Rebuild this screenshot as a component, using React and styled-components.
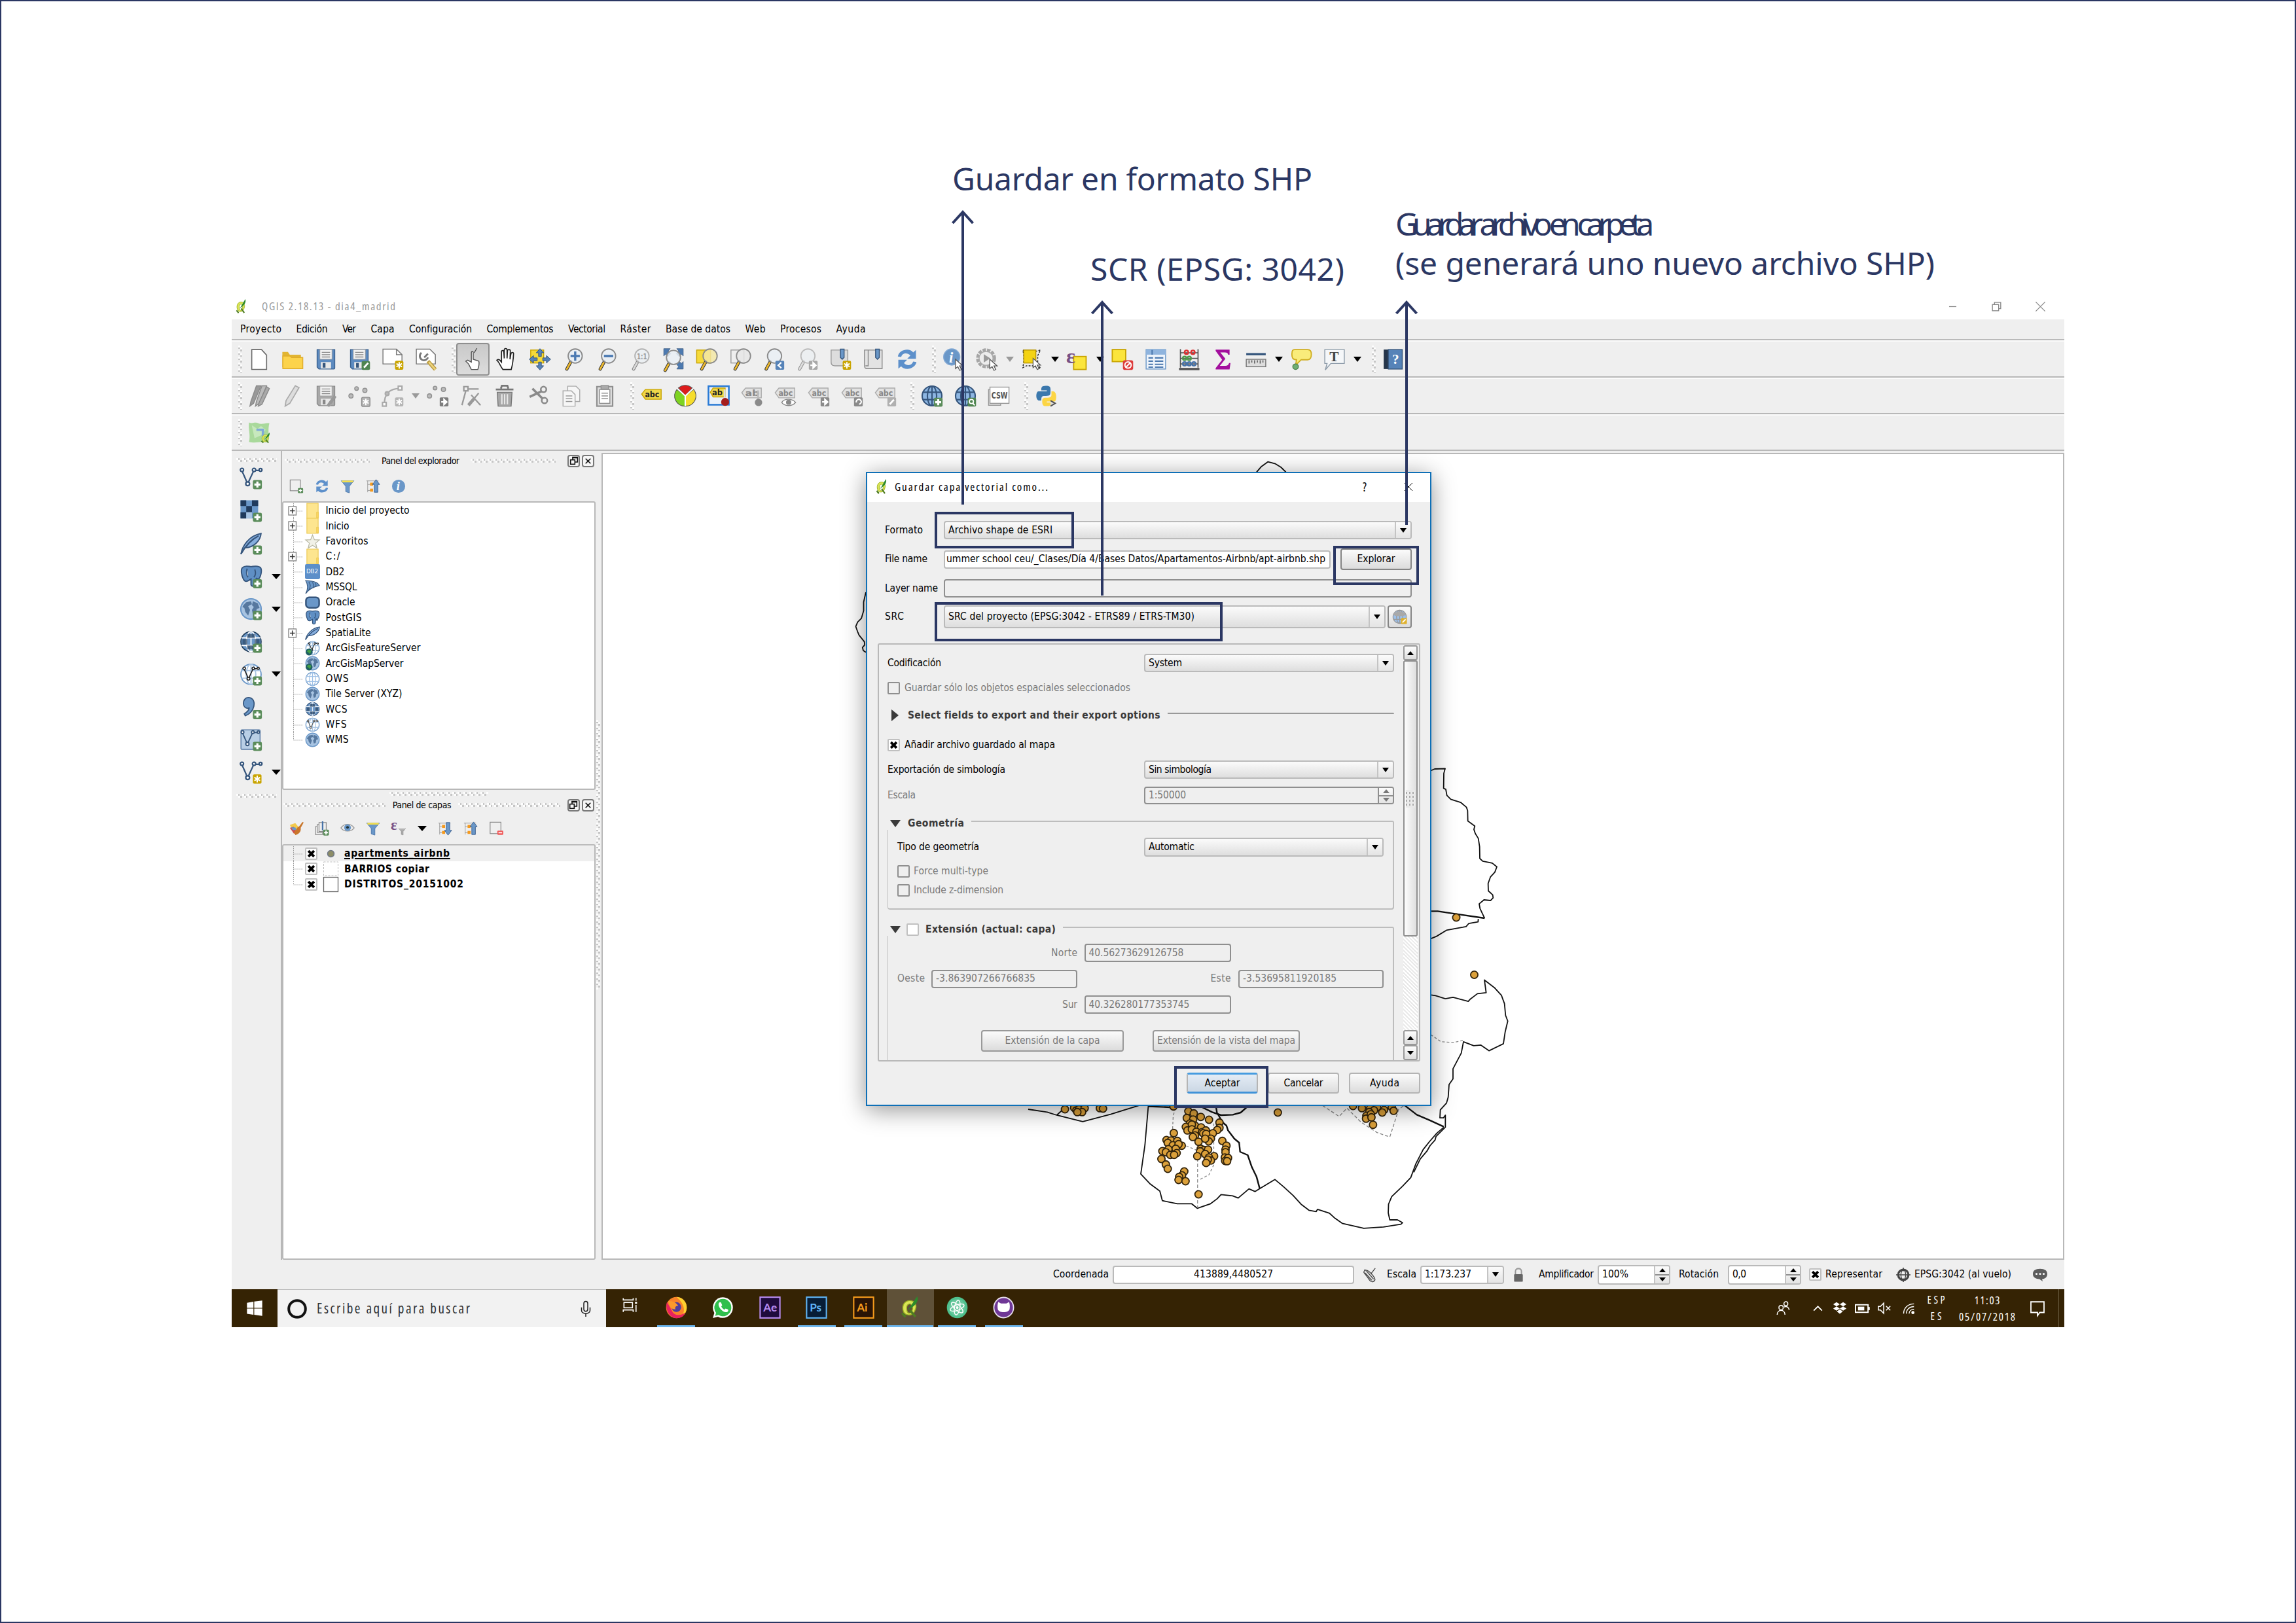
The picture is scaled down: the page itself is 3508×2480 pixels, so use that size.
import React, { useLayoutEffect, useRef, useState } from "react";
import styled, { createGlobalStyle, css } from "styled-components";

const NAVY = "#2b3763";
const UI = `"DejaVu Sans Condensed", "DejaVu Sans", sans-serif`;
const SEGOE = `"Open Sans", "Noto Sans", sans-serif`;

const Global = createGlobalStyle`
  * { box-sizing: border-box; }
  html, body { margin: 0; padding: 0; background: #fff; }
  body { font-family: ${UI}; font-stretch: condensed; font-size: 16px; color: #000; }
`;

/* ---------- text fitted to a measured width ---------- */
const Span = styled.span`
  display: inline-block;
  flex: none;
  white-space: pre;
  line-height: ${(p) => p.$lh || 1.2};
  font-size: ${(p) => p.$s || 15.5}px;
  color: ${(p) => p.$c || "#000"};
  font-weight: ${(p) => (p.$b ? 700 : 400)};
  font-family: ${(p) => p.$f || UI};
  text-decoration: ${(p) => (p.$u ? "underline" : "none")};
  text-decoration-thickness: 2px;
  text-underline-offset: 2px;
`;
function T({ children, w, s, c, b, f, u, lh }) {
  const ref = useRef(null);
  const [ls, setLs] = useState(0);
  useLayoutEffect(() => {
    if (!w) return;
    const nat = ref.current.getBoundingClientRect().width;
    setLs((w - nat) / Math.max(1, children.length - 1));
  }, []);
  return (
    <Span ref={ref} $s={s} $c={c} $b={b} $f={f} $u={u} $lh={lh} style={{ letterSpacing: ls, marginRight: -ls }}>
      {children}
    </Span>
  );
}

/* ---------- icons ---------- */
const BL = "#6a97c8", DB = "#35557c", GR = "#5a8c5a";
const Plus = ({ x = 14, y = 14 }) => (
  <g transform={`translate(${x} ${y})`}>
    <rect width="9.4" height="9.6" rx="1.6" fill={GR} />
    <path d="M4.7 1.6v6.4M1.5 4.8h6.4" stroke="#fff" strokeWidth="2.2" />
  </g>
);
const Star = ({ x = 14.5, y = 13.5, c = "#c9a400" }) => (
  <g transform={`translate(${x} ${y})`}>
    <rect width="9" height="9.8" rx="1.5" fill={c} />
    <path d="M4.5 1.5v7M1.5 3.2l6 3.4M7.5 3.2l-6 3.4" stroke="#fff" strokeWidth="1.4" />
  </g>
);
const Arrow = ({ x = 14, y = 13.5, c = "#8a8a8a", left }) => (
  <g transform={`translate(${x} ${y})`}>
    <rect width="9.4" height="9.8" rx="1.2" fill={c} />
    <path d={left ? "M6.3 2 3 5l3.300 3" : "M1.600 5h4M4.600 2.200 7.600 5 4.600 7.800z"} fill={left ? "none" : "#fff"} stroke="#fff" strokeWidth="1.6" />
  </g>
);
const Mag = ({ cx = 14, cy = 8.5, fill = "#e9eef5", o = 1, h = "#edb92e" }) => (
  <g opacity={o}>
    <path d={`M${cx - 4.6} ${cy + 6}L${cx - 9} ${cy + 14}`} stroke="#333" strokeWidth="3.4" strokeLinecap="round" />
    <path d={`M${cx - 5.4} ${cy + 7.4}L${cx - 9} ${cy + 14}`} stroke={h} strokeWidth="2" strokeLinecap="round" />
    <circle cx={cx} cy={cy} r="7.6" fill={fill} fillOpacity=".85" stroke="#8b8b8b" strokeWidth="1.300" />
  </g>
);
const Floppy = ({ g }) => (
  <g>
    <path d="M2.500 1.500h19v20a1 1 0 0 1-1 1H4.500l-2-2z" fill={g ? "#a9a9a9" : "#5d8bc0"} stroke={g ? "#8a8a8a" : "#3c628f"} />
    <rect x="5.500" y="1.500" width="13" height="10.500" fill="#f2f2f2" stroke="#999" strokeWidth=".6" />
    <path d="M7.500 4.500h9M7.500 7h9M7.500 9.500h9" stroke="#888" />
    <rect x="6.500" y="15" width="11" height="7" fill="#e8e8e8" /><rect x="8.500" y="16" width="3" height="5" fill={g ? "#888" : "#35557c"} />
  </g>
);
const Page = ({ x = 4 }) => <path d={`M${x} 1.500h10.500l5.500 6v15.500h-16z`} fill="#fff" stroke="#6b6b6b" strokeWidth="1.100" />;
const Tag = ({ c = "#f0d84a", s = "#c9a400", t = "#222", y = 5, txt = "abc" }) => (
  <g>
    <path d={`M1 ${y + 5}l4-5h17v10.500H5z`} fill={c} stroke={s} />
    <text x="4.500" y={y + 8.500} fontSize="9" fontWeight="700" fontFamily="DejaVu Sans Condensed, sans-serif" fill={t} textLength="15.500" lengthAdjust="spacingAndGlyphs">{txt}</text>
  </g>
);
const Globe = ({ c = "#8db6e2", s = "#35557c", l = "#35557c", w = 1.3 }) => (
  <g fill="none" stroke={l} strokeWidth={w}>
    <circle cx="12" cy="12" r="10.600" fill={c} stroke={s} />
    <ellipse cx="12" cy="12" rx="5" ry="10.600" /><path d="M12 1.400v21.200M2 8h20M2 16h20" />
  </g>
);
const Earth = () => (
  <g>
    <circle cx="12" cy="12" r="10.700" fill="#a8c4e2" stroke="#6a97c8" strokeWidth="1.400" />
    <path d="M4 8l3-3 5-1 1 3-4 2 2 4-2 6-3-4-1-4-2-1zM14 4l5 2 2 5-3 1-1 5-3 1-1-5 2-3-2-2z" fill="#41658f" opacity=".8" />
  </g>
);
const Vee = ({ o = 0, c = DB }) => (
  <g stroke={c} fill="#fff" strokeWidth="1.500" transform={`translate(${o} ${o})`}>
    <path d="M2.500 4.500 8.500 18 15 4h6.500" fill="none" />
    <circle cx="2.500" cy="3.500" r="1.700" /><circle cx="15.200" cy="3.500" r="1.700" /><circle cx="22" cy="3.500" r="1.500" /><circle cx="8.500" cy="18" r="2" />
  </g>
);
const Feather = () => <g><path d="M1.500 23C3 14 10 4 22.500 1.500 22 9 15 16 6 16.500" fill="#86aede" stroke={DB} strokeWidth="1.300" /><path d="M1.500 23C6 15 12 8 20 4" stroke={DB} strokeWidth="1.500" fill="none" /></g>;
const Elephant = () => <path d="M3 3c3-3 7-1 9-1s7-2 10 1c2 3 0 10-2 12l-3-1 3 2c-1 1-3 0-3-1l-.5 6c-.5 2-4 2-4.500 0V15c-3 2-6 4-8 0S1 5 3 3zM8 4c-1 3-1 7 1 9M16 5c1 3 1 6-1 8" fill="#5f8fc4" stroke={DB} strokeWidth="1.300" />;
const Funnel = ({ g }) => <g><path d="M1.500 3h21l-7.500 9v11l-6-2v-9z" fill={g ? "#aaa" : BL} stroke={g ? "#888" : "#4773a8"} /><path d="M2.500 2.500h19v3h-19z" fill={g ? "#ccc" : "#f4e04d"} /></g>;
const Refresh = () => (
  <g fill="#5d90cb"><path d="M2 9C3 2 14-1 18.500 4.500L21.500 2v9.500H12l3.500-3.500C12 4.500 7 5 5.500 9.500z" /><path d="M22 15c-1 7-12 10-16.500 4.500L2.500 22v-9.500H12l-3.500 3.500c3.500 3.500 8.500 3 10-1.500z" /></g>
);
const Cursor = ({ x = 12, y = 12 }) => <path transform={`translate(${x} ${y})`} d="M0 0v10l2.500-2 2 4 2-1-2-3.800h3.500z" fill="#fff" stroke="#555" strokeWidth=".9" />;
const Quill = () => (
  <g><path d="M17 6C9 2 3 7 4 14s10 8 13 2 1-7 0-10zm-3 4c2 3 0 8-3 8s-4-8-1-9.500S13 9 14 10z" fill="#dbe557" fillRule="evenodd" stroke="#9bb021" /><path d="M9 15C13 11 15 6 20 0c2 5-2 10-8 13z" fill="#2c8a2c" /><path d="M3 18l4 4M12 15l6 7" stroke="#4f7d23" strokeWidth="2.500" /></g>
);
const Tree = ({ up }) => (
  <g><path d="M1 3h20M3 3v19M3 9h6M3 19h6" stroke="#999" fill="none" /><rect x="7" y="6" width="5" height="5" fill="#f59a1e" /><rect x="7" y="16" width="5" height="5" fill="#f59a1e" />
    <path d={up ? "M17 1l6 8h-3v13h-6V9h-3z" : "M17 23l6-8h-3V2h-6v13h-3z"} fill={BL} stroke="#3a5d8c" /></g>
);
const ic = {
  page: <Page />,
  open: <g><path d="M1 4h6l2 3h12v3H8L1 21z" fill="#e2b532" /><path d="M1.500 22V8.500H9l2 1.500h12V22z" fill="#fcd34b" stroke="#e0ad2b" /></g>,
  save: <Floppy />,
  saveas: <g><Floppy /><rect x="14.500" y="14" width="9" height="9.500" rx="1.500" fill="#4f8550" /><path d="M17 21l4.500-5" stroke="#fff" strokeWidth="2" /></g>,
  newcomp: <g><path d="M1.500 1h14.500l6 6v10H1.500z" fill="#fff" stroke="#777" /><path d="M16 1v6h6" fill="none" stroke="#777" /><Star /></g>,
  compmgr: <g><path d="M1.500 1h14.500l6 6v10H1.500z" fill="#fff" stroke="#777" /><path d="M7 5a4.500 4.500 0 1 0 7 5M14 6l-4 4" stroke="#777" strokeWidth="2" fill="none" /><path d="M14 14l8 9" stroke="#b99a3c" strokeWidth="4" /><path d="M15 15l7 8" stroke="#ecd27c" strokeWidth="2" /></g>,
  touch: <path d="M10 23l-3-6-3-3 2-1 4 2V5c0-2 2-2 2 0v7l6 2c1 3 0 6-1 9zM13 5l3-5" fill="#fff" stroke="#555" />,
  hand: <path d="M8 23c-3-4-4-8-6.500-10 2-2 3.500 0 5 2V4c0-2 2.500-2 2.500 0l.5 7V2c0-2 3-2 3 0v9l.5-8c0-2 3-2 3 0l-.3 9 1-6c.5-2 3-1.500 2.800 0-.3 7-.5 10-2.500 17z" fill="#fff" stroke="#222" strokeWidth="1.200" />,
  pan: <g><rect x="2" y="2" width="14" height="14" fill="#f6da3a" stroke="#c9a400" /><path d="M12 .500 16 5h-2.500v4h-3V5H8zM12 23.500 16 19h-2.500v-4h-3v4H8zM.5 12 5 8v2.500h4v3H5V16zM23.500 12 19 8v2.500h-4v3h4V16z" fill="#5683b8" stroke="#35557c" strokeWidth=".7" /></g>,
  zin: <g><Mag /><path d="M14 3.500v10M9 8.500h10" stroke="#4a79b2" strokeWidth="2.400" /></g>,
  zout: <g><Mag /><path d="M9 8.500h10" stroke="#4a79b2" strokeWidth="2.600" /></g>,
  z11: <g><Mag o={0.6} h="#ccc" /><text x="8.500" y="12" fontSize="9" fontWeight="700" fontFamily="DejaVu Sans, sans-serif" fill="#999" textLength="11" lengthAdjust="spacingAndGlyphs">1:1</text></g>,
  zfull: <g><path d="M1.500.500h7l-2 2.500 2.500 3-3 3-2.500-2.500-2 2zM22.500.500h-7l2 2.500-2.500 3 3 3 2.500-2.500 2 2zM22.500 22.500h-7l2-2.500-2.500-3 3-3 2.500 2.500 2-2z" fill="#4d7ab0" stroke="#35557c" strokeWidth=".5" /><Mag cx={12} cy={10} /></g>,
  zsel: <g><rect x="1" y="2" width="15" height="14" fill="#f6da3a" stroke="#c9a400" /><Mag fill="#f3e7a6" cx={15.500} /></g>,
  zlay: <g><rect x="2" y="2" width="14" height="14" fill="#eee" stroke="#999" /><Mag fill="#e6e6e6" cx={15.500} /></g>,
  zlast: <g><Mag cx={13} /><Arrow c="#5683b8" left /></g>,
  znext: <g><Mag cx={13} o={0.5} h="#ccc" /><Arrow c="#a8a8a8" /></g>,
  bookp: <g><path d="M2 2h18v17H6c-3 0-4-2-4-4z" fill="#ddd" stroke="#999" /><path d="M12 1v9l2 2 2-2V1z" fill={BL} stroke={DB} /><Star /></g>,
  book: <g><path d="M2 2h19v20H5c-2 0-3-1-3-3zM6 2v17H3" fill="#e3e3e3" stroke="#8a8a8a" /><path d="M14 1v9l2 2 2-2V1z" fill={BL} stroke={DB} /></g>,
  refresh: <Refresh />,
  info: <g><circle cx="10" cy="9.500" r="8.800" fill={BL} stroke="#86abd5" /><text x="7" y="15.500" fontSize="16" fontStyle="italic" fontWeight="700" fontFamily="Liberation Serif, serif" fill="#fff">i</text><Cursor x={14} y={12} /></g>,
  action: <g><circle cx="11" cy="11" r="9" fill="none" stroke="#a5a5a5" strokeWidth="3.500" strokeDasharray="3.600 1.200" /><circle cx="11" cy="11" r="7.500" fill="#ececec" stroke="#aaa" /><path d="M8.500 6.500l7 4.500-7 4.500z" fill="#999" /><Cursor x={15} y={12} /></g>,
  select: <g><path d="M2 2l4 2h8l7-2-3 6v8l3 6-8-3H6l-4 2 1-7V8z" fill="none" stroke="#222" strokeDasharray="2 1.500" /><rect x="3" y="2" width="13" height="14" fill="#f4d313" stroke="#b89500" /><Cursor x={13} y={11} /></g>,
  eps: <g><rect x="8" y="9" width="13.500" height="14" fill="#fbe53c" stroke="#c9a400" strokeWidth="1.300" /><text x="0" y="16" fontSize="23" fontWeight="700" fontFamily="Liberation Serif, serif" fill="#774f84">ε</text></g>,
  desel: <g><rect x="1" y="1.500" width="14.500" height="13" fill="#fbe53c" stroke="#c9a400" strokeWidth="1.300" /><rect x="12.500" y="13" width="11" height="10.500" rx="2" fill="#dd3c3c" /><circle cx="18" cy="18.200" r="3.400" fill="none" stroke="#fff" strokeWidth="1.400" /><path d="M15.800 20.500l4.500-4.600" stroke="#fff" strokeWidth="1.400" /></g>,
  table: <g><rect x="1.500" y="1.500" width="21" height="21" fill="#eef4fb" stroke="#6a97c8" /><rect x="1.500" y="1.500" width="21" height="5.500" fill="#8fb4de" /><path d="M8 2v5M4 10.500h5M11 10.500h9M4 14h5M11 14h9M4 17.500h5M11 17.500h9M4 20.500h5M11 20.500h9" stroke="#4d7ab0" strokeWidth="1.500" /></g>,
  abacus: <g fill="none" stroke="#555"><path d="M2.500 1v20M21.500 1v20M2.500 5h19M2.500 11h19M2.500 17h19" strokeWidth="1.200" /><path d="M1 22.500h22" strokeWidth="2.500" /><g strokeWidth="1.700"><circle cx="9" cy="4.500" r="2" stroke="#d33" /><circle cx="16" cy="4.500" r="2" stroke="#d33" /><circle cx="7" cy="11" r="2" stroke="#4b9a4b" /><circle cx="12" cy="11" r="2" stroke="#4b9a4b" /><circle cx="7" cy="17" r="2" stroke="#4773a8" /><circle cx="12" cy="17" r="2" stroke="#4773a8" /><circle cx="17" cy="17" r="2" stroke="#4773a8" /></g></g>,
  sigma: <path d="M4.500 1.500h15v5.500h-1.500c-.5-2-1.500-2.500-3.500-2.500H9.500L15 11.500 9 19h6c2 0 3.500-1 4-3h1.500l-1 7h-15v-1.500l7-9-7-9.500z" fill="#a30e9d" />,
  ruler: <g><path d="M1.500 6.500h21" stroke="#35557c" strokeWidth="2.400" /><rect x="1.500" y="12" width="21" height="8" fill="#ddd" stroke="#777" /><path d="M4.500 13v3.500M7.500 13v2.500M10.500 13v3.500M13.500 13v2.500M16.500 13v3.500M19.500 13v2.500" stroke="#555" /></g>,
  tip: <g><path d="M5 1.500h14c3 0 4 2 4 5s-1 6-4 6h-7l-6 6 1-6c-4 0-5-2-5-6s1-5 3-5z" fill="#f9ec7a" stroke="#cfae21" strokeWidth="1.300" /><circle cx="6" cy="20" r="3" fill="#6fae73" stroke="#4f8550" /></g>,
  text: <g><path d="M1.500 1.500h21v15H8l-6 7 2-7H1.500z" fill="#f5f7f9" stroke="#8c9aa8" /><text x="6.500" y="14" fontSize="15" fontWeight="700" fontFamily="Liberation Serif, serif" fill="#444">T</text></g>,
  help: <g><rect x="1.500" y="1.500" width="5" height="21" fill="#26364b" /><rect x="6.500" y="1.500" width="15" height="21" fill="#5683b8" stroke="#35557c" /><text x="10.500" y="17" fontSize="15" fontWeight="700" fontFamily="Liberation Serif, serif" fill="#fff">?</text></g>,
  pencils: <g stroke="#8a8a8a"><path d="M9 1h5L6 20l-4 3 1-5z" fill="#999" /><path d="M15 1h5l-8 19-4 3 1-5z" fill="#bbb" /><path d="M20 2l3 2-8 17-4 2 1-4z" fill="#aaa" /></g>,
  pencil: <path d="M15 1l4 2-10 17-5 3 1-6z" fill="#ddd" stroke="#aaa" strokeWidth="1.200" />,
  savee: <g><Floppy g /><path d="M22 12l-8 11" stroke="#999" strokeWidth="3.500" /></g>,
  pts: <g fill="#bbb" stroke="#8f8f8f"><circle cx="9" cy="4" r="2" /><circle cx="18" cy="6" r="2.300" /><circle cx="3" cy="12" r="2.300" /><Star c="#b5b5b5" /></g>,
  curve: <g fill="none" stroke="#aaa" strokeWidth="1.600"><path d="M3 21C3 10 8 4 20 4" /><rect x="1" y="19" width="4" height="4" fill="#fff" /><rect x="18" y="1.500" width="4" height="4" fill="#fff" /><circle cx="6" cy="9.500" r="2" fill="#bbb" /><g stroke="none"><Star c="#b5b5b5" /></g></g>,
  ptsm: <g fill="#bbb" stroke="#8f8f8f"><circle cx="9" cy="3.500" r="2" /><circle cx="18" cy="5" r="2.300" /><circle cx="3" cy="12" r="2.300" /><g stroke="none"><Arrow c="#7e7e7e" /></g></g>,
  vert: <g stroke="#999" fill="none" strokeWidth="1.600"><rect x="4" y="2" width="4.500" height="4.500" /><path d="M8 4.500h12M6 7L2 22M9 22L20 9M12 11l10 11" /><path d="M9 22l6-7" strokeWidth="3.500" /></g>,
  trash: <g><path d="M4 8h16l-1 15H5z" fill="#a8a8a8" stroke="#777" /><path d="M9 10v11M12 10v11M15 10v11" stroke="#e8e8e8" strokeWidth="1.500" /><path d="M2.500 5h19M8 4l1-3h6l1 3" stroke="#777" strokeWidth="2" fill="none" /></g>,
  cut: <g stroke="#8a8a8a" fill="none" strokeWidth="1.800"><circle cx="18" cy="5" r="3" /><circle cx="19" cy="17" r="3" /><path d="M16 7L3 13M17 15L6 4" strokeWidth="2.500" /></g>,
  copy: <g fill="#f6f6f6" stroke="#aaa"><path d="M8 1.500h9l4 4V18H8z" /><path d="M3 6.500h9l4 4V23H3z" /><path d="M6 12h7M6 15h7M6 18h7" stroke="#999" /></g>,
  paste: <g stroke="#8f8f8f"><rect x="3.500" y="2" width="17" height="21" fill="#ddd" strokeWidth="1.500" /><rect x="6.500" y="5" width="11" height="15" fill="#fff" /><rect x="8" y=".8" width="8" height="4" fill="#aaa" /><path d="M8.500 9h7M8.500 12h7M8.500 15h7" /></g>,
  abc: <Tag />,
  pie: <g stroke="#555" strokeWidth=".8"><path d="M12 12V23A11 11 0 0 1 3 5z" fill="#7ed321" /><path d="M12 12v11a11 11 0 0 0 9-18z" fill="#f6dd2c" /><path d="M12 11.500L4.500 3.500C9-.5 15-.5 19.500 3.500z" fill="#dd1c1c" /><path d="M12 12v11M12 12L3.500 4M12 12l8.500-8" stroke="#fff" strokeWidth="1.500" /></g>,
  abpin: <g><rect x="1" y="1.500" width="22" height="20" fill="#eaf1fa" stroke="#2b7bd6" strokeWidth="1.800" /><path d="M3 8l3-4.500h13V13H6z" fill="#f0d84a" stroke="#c9a400" /><text x="5" y="11.500" fontSize="9" fontWeight="700" fontFamily="DejaVu Sans, sans-serif" fill="#222">ab</text><path d="M18.500 5v12" stroke="#ddd" strokeWidth="2" /><circle cx="19" cy="18.500" r="4.300" fill="#a51d1d" /></g>,
  gpin: <g><Tag c="#e2e2e2" s="#aaa" t="#888" y={3.500} txt="ab" /><path d="M18.500 6v12" stroke="#bbb" strokeWidth="2" /><circle cx="19" cy="19" r="4" fill="#8a8a8a" /></g>,
  geye: <g><Tag c="#e2e2e2" s="#aaa" t="#888" y={3.500} /><path d="M8 19c3-4.500 11-4.500 15 0-4 4.500-12 4.500-15 0z" fill="#fff" stroke="#888" /><circle cx="15.500" cy="18.800" r="2.800" fill="#888" /></g>,
  gmove: <g><Tag c="#e2e2e2" s="#aaa" t="#888" y={3.500} /><Arrow c="#8a8a8a" /></g>,
  grot: <g><Tag c="#e2e2e2" s="#aaa" t="#888" y={3.500} /><rect x="14" y="13.500" width="9.400" height="9.800" rx="1.200" fill="#8a8a8a" /><path d="M16.500 19a2.700 2.700 0 1 1 3 2" stroke="#fff" strokeWidth="1.500" fill="none" /></g>,
  gedit: <g><Tag c="#e2e2e2" s="#aaa" t="#888" y={3.500} /><rect x="14" y="13.500" width="9.400" height="9.800" rx="1.200" fill="#b0b0b0" /><path d="M16.500 21l4.500-5" stroke="#fff" strokeWidth="2" /></g>,
  globep: <g><Globe w={1.500} /><Plus /></g>,
  globes: <g><Globe w={1.500} /><rect x="14.500" y="14" width="9" height="9.500" rx="1.500" fill="#4f8550" /><circle cx="18.500" cy="18" r="2.200" fill="none" stroke="#fff" strokeWidth="1.300" /><path d="M20 20l2 2" stroke="#fff" strokeWidth="1.500" /></g>,
  csw: <g><path d="M1 5h3v14h10v3H1z" fill="#e4e4e4" stroke="#999" /><rect x="2.500" y="2.500" width="20.500" height="17.500" fill="#fff" stroke="#999" /><text x="4" y="14.500" fontSize="9.500" fontWeight="700" fontFamily="DejaVu Sans, sans-serif" fill="#555" textLength="17.500" lengthAdjust="spacingAndGlyphs">CSW</text></g>,
  py: <g><path d="M12 1c-5 0-5 2-5 5h6v1H4c-3 0-3.500 10 1 10h2c0-5 1-5 5-5 5 0 5-1 5-7 0-3-1-4-5-4z" fill="#3b78ad" /><path d="M18 7v4c0 3-3 3-6 3s-4 1-4 4c0 5 2 5 5 5s5-1 5-4h-5v-1h8c3 0 3-11-1-11z" fill="#fcd544" /><path d="M17 17l5 3-5 3" stroke="#555" strokeWidth="1.500" fill="#ddd" /></g>,
  osm: <g><path d="M1 1c4 2 6-1 10 1s8-1 12 0c-2 7 0 14-1 21-8-2-14 1-21-1C3 15 0 8 1 1z" fill="#a9d99b" /><path d="M4 4l6 4 4-3 5 4-5 6-7 3z" fill="#c7e8bd" /><path d="M9 9h7v7" stroke="#7fa8d8" strokeWidth="2.500" fill="none" /><g transform="translate(13 12) scale(.5)"><Quill /></g></g>,
  /* layer toolbar */
  vplus: <g><Vee /><Plus /></g>,
  raster: <g><rect x="1" y="1" width="18.500" height="19" fill={BL} /><path d="M1 1h6v6H1zM13 1h6.500v6H13zM7 7h6v6.500H7zM1 13.500h6V20H1z" fill="#203a5c" /><path d="M7 13.500h6V20H7z" fill="#a8c4e2" /><Plus /></g>,
  feather: <g><Feather /><Plus /></g>,
  pgp: <g><Elephant /><Plus y={15} /></g>,
  wmsp: <g><Earth /><Plus /></g>,
  wcsp: <g><Globe c={BL} s="#26425f" l="#fff" w={1.200} /><path d="M8 4h8v4H8zM8 16h8v4H8zM3 9h5v6H3zM16 9h5v6h-5z" fill="#26425f" opacity=".7" /><Plus /></g>,
  wfsp: <g><Globe c="#fff" s="#6a97c8" l="#a8c4e2" /><g transform="translate(3 3) scale(.75)"><Vee c="#222" /></g><Plus /></g>,
  comma: <g><path d="M9 2c5 0 7 4 6 9s-5 9-9 10l-1-2c3-2 5-4 5-6-4 1-6-2-6-5s2-6 5-6z" fill={BL} stroke={DB} strokeWidth="1.200" /><Plus y={15} /></g>,
  virt: <g><rect x="1.500" y="1.500" width="20" height="20.500" rx="1" fill="#b9cfe6" stroke="#587ba5" /><g transform="translate(1 1) scale(.85)"><Vee /></g><Plus /></g>,
  vstar: <g><Vee /><Star x={14} y={14.500} /></g>,
  /* browser toolbar */
  addsel: <g><rect x="1.500" y="1.500" width="17" height="18" fill="none" stroke="#888" strokeWidth="1.300" /><rect x="14.500" y="15" width="8.500" height="8.500" rx="1.500" fill={GR} /><path d="M18.700 16.500v5.500M16 19.200h5.500" stroke="#fff" strokeWidth="1.600" /></g>,
  funnel: <Funnel />, treeup: <Tree up />, treedn: <Tree />,
  infoc: <g><circle cx="12" cy="12" r="11" fill={BL} /><text x="8.500" y="18.500" fontSize="20" fontStyle="italic" fontWeight="700" fontFamily="Liberation Serif, serif" fill="#fff">i</text></g>,
  brush: <g><path d="M1 6l9-3 5 6-2 10-5 2z" fill="#f2c94c" /><path d="M1 11l6-2 4 6-3 6z" fill="#d14a4a" /><path d="M3 10l7 0 2 4-6 1z" fill="#6a97c8" /><path d="M8 17c4 0 4-8 8-8l6-8 2 1-5 9c1 7-4 11-9 12z" fill="#c9762b" /></g>,
  group: <g fill="#eee" stroke="#888" strokeWidth="1.300"><rect x="1" y="9" width="12" height="13" /><rect x="4" y="5.500" width="12" height="13" /><rect x="7" y="2" width="12" height="15" /><path d="M13 0v15" stroke="#4773a8" strokeWidth="2.500" /><g stroke="none"><Plus /></g></g>,
  eye: <g><path d="M1 11c5-8 17-8 22 0-5 7-17 7-22 0z" fill="#ececec" stroke="#999" strokeWidth="1.500" /><circle cx="12" cy="10.500" r="5.600" fill={BL} /><circle cx="12" cy="10" r="2.200" fill="#233" /></g>,
  epsf: <g><text x="-1" y="15" fontSize="24" fontWeight="700" fontFamily="Liberation Serif, serif" fill="#774f84">ε</text><g transform="translate(11 11) scale(.52)"><Funnel g /></g></g>,
  rem: <g><rect x="2" y="1.500" width="18" height="19" fill="none" stroke="#888" strokeWidth="1.300" /><rect x="14" y="15.500" width="10" height="7" rx="1.500" fill="#ef5a5a" /><path d="M16 19h6" stroke="#fff" strokeWidth="1.800" /></g>,
  /* tree */
  folder: <g><path d="M3 0h18v24H3z" fill="#fde58f" stroke="#ecc955" strokeWidth="1.200" /><path d="M18.500 14h3v9h-3z" fill="#fbd660" stroke="#ecc955" /></g>,
  star: <path d="M12 1.500l3 7.500 8 .5-6 5 2 8-7-4.500-7 4.500 2-8-6-5 8-.5z" fill="#f1f1e8" stroke="#b9b9a4" strokeWidth="1.300" />,
  db2: <g><rect x="0" y="0" width="24" height="24" rx="2.500" fill="#5d8fc9" /><text x="2" y="14.500" fontSize="9.500" fontFamily="DejaVu Sans, sans-serif" fill="#fff" textLength="19" lengthAdjust="spacingAndGlyphs">DB2</text></g>,
  mssql: <path d="M1 1c8 1 18 1 22 8-9 2-17 6-22 13 4-7 4-14 0-21zM6 3c3 4 3 9 0 13M12 4c2 4 2 6 1 9M17 5c1 3 1 4 0 6" fill="#6a97c8" stroke={DB} strokeWidth="1.100" />,
  oracle: <rect x="1.500" y="4" width="21" height="16.500" rx="5" fill="#6a97c8" stroke="#35557c" strokeWidth="2.600" />,
  pg: <Elephant />, spl: <g transform="rotate(4 12 12)"><Feather /></g>,
  afs: <g><Globe c="#fff" s="#6a97c8" l="#a8c4e2" /><g transform="translate(5 2) scale(.7)"><Vee c="#222" /></g><circle cx="6.500" cy="18" r="5.500" fill="#1f5f63" /><path d="M3 17l3-3 4 2-2 5z" fill="#43a047" /></g>,
  ams: <g><Earth /><circle cx="6.500" cy="18" r="5.500" fill="#1f5f63" /><path d="M3 17l3-3 4 2-2 5z" fill="#43a047" /></g>,
  ows: <Globe c="#fff" s="#6a97c8" l="#9fc1e6" />,
  wms: <Earth />,
  wcs: <g><Globe c={BL} s="#35557c" l="#dce8f5" w={1.200} /><path d="M8 4h8v4H8zM8 16h8v4H8zM3 9h5v6H3zM16 9h5v6h-5z" fill="#26425f" opacity=".7" /></g>,
  wfs: <g><Globe c="#fff" s="#6a97c8" l="#a8c4e2" /><g transform="translate(3 3) scale(.75)"><Vee c="#555" /></g></g>,
  quill: <Quill />,
  crsbtn: <g><Globe c="#9cc0ea" s="#999" l="#999" /><path d="M2 9C4 2 20 2 22 9l-5 2H7z" fill="#a9a9a9" /><rect x="14" y="14" width="9.500" height="9.500" rx="1" fill="#e0b12c" /><path d="M16.500 21l5-5" stroke="#fff" strokeWidth="2" /></g>,
  mouse: <g stroke="#444" strokeWidth="1.400" fill="#ddd"><path d="M3 3l9 7M2 8l8 6M21 1l-7 9" /><path d="M3 5c4-3 10 3 14 8s5 8 1 10-6-1-10-7S0 8 3 5z" /><path d="M6 5l12 14M4 9l11 12" /></g>,
  lock: <g><path d="M6.500 12V6c0-6 11-6 11 0v6" fill="none" stroke="#999" strokeWidth="2.400" /><rect x="4" y="11" width="16" height="12.500" rx="1.500" fill="#666" /></g>,
  crs: <g fill="none" stroke="#444"><circle cx="12" cy="12" r="8.500" strokeWidth="3.500" /><ellipse cx="12" cy="12" rx="4" ry="8" strokeWidth="1.500" /><path d="M0 12h7M17 12h7M12 0v6M12 18v6M4 12h16" strokeWidth="1.800" /></g>,
  bubble: <g><path d="M12 2c7 0 11 3 11 8.500 0 5-3 8-8 8.500l1 4-5-4C4 18.500 1 15 1 10.500 1 5 5 2 12 2z" fill="#5c5c5c" /><circle cx="6.500" cy="10.500" r="1.600" fill="#fff" /><circle cx="12" cy="10.500" r="1.600" fill="#fff" /><circle cx="17.500" cy="10.500" r="1.600" fill="#fff" /></g>,
  /* taskbar */
  win: <path d="M2 5l8.500-1.500v8H2zM11.500 3.300L22 2v9.500H11.500zM2 12.500h8.500v8L2 19.200zM11.500 12.500H22V22l-10.500-1.500z" fill="#fff" />,
  ring: <circle cx="12" cy="12" r="9.600" fill="none" stroke="#111" strokeWidth="3" />,
  mic: <g fill="none" stroke="#222" strokeWidth="1.500"><rect x="9" y="1.500" width="6" height="14" rx="3" /><path d="M5.500 10v4c0 6 13 6 13 0v-4M12 18.500V23" /></g>,
  tview: <g fill="none" stroke="#fff" strokeWidth="1.500"><path d="M3 2.500V5h14V2.500M3 22v-3h14v3M21 2v4M21 12v10" /><rect x="4" y="8.500" width="12" height="7.500" /><path d="M19.500 9h3" strokeWidth="2.500" /></g>,
  ff: <g><circle cx="12" cy="12" r="11.500" fill="#f9832a" /><path d="M12 .5A11.500 11.500 0 0 1 17 22.300C24 15 19 6 12 .5z" fill="#fdd02f" /><path d="M1.500 6C-1 14 4 23 12 23.500c5 0 8-2 10-6-6 4-13 3-15-2z" fill="#e8215f" /><circle cx="12" cy="11.500" r="5.300" fill="#4f3d9e" /><path d="M3 5c4 0 8 1 11 5-3 0-4 2-3 4-4 0-7-2-8-9z" fill="#fb9a2b" /></g>,
  wa: <g><path d="M12 .8a11.200 11.200 0 1 1-5.500 21L.8 23.300l1.700-5.500A11.200 11.200 0 0 1 12 .8z" fill="#fff" /><path d="M12 2.600a9.400 9.400 0 1 1-5 17.400l-3.600 1 1-3.400A9.400 9.400 0 0 1 12 2.600z" fill="#2fbf4c" /><path d="M8 6.500c-3 3 3 11 8.500 10.500 2-1 1.500-2.500 1-3l-2.500-1-1.200 1.300c-2-.8-3-2-3.600-3.500l1-1.300L10 6.700c-.8-.8-1.500-.6-2-.2z" fill="#fff" /></g>,
  ae: <Adobe bg="#1f0b3d" c="#b98cf2" t="Ae" />, ps: <Adobe bg="#071d36" c="#5fb4f5" t="Ps" />, ai: <Adobe bg="#2a1405" c="#f79c1c" t="Ai" />,
  atom: <g><circle cx="12" cy="12" r="11.500" fill="#4fc08d" /><circle cx="12" cy="12" r="9" fill="#66c79c" /><g fill="none" stroke="#fff" strokeWidth="1"><ellipse cx="12" cy="12" rx="8" ry="3" transform="rotate(-20 12 12)" /><ellipse cx="12" cy="12" rx="8" ry="3" transform="rotate(40 12 12)" /><ellipse cx="12" cy="12" rx="8" ry="3" transform="rotate(100 12 12)" /></g><circle cx="12" cy="12" r="1.500" fill="#fff" /></g>,
  gh: <g><circle cx="12" cy="12" r="11.600" fill="#e8e0ee" /><circle cx="12" cy="12" r="10.300" fill="#6f3796" /><path d="M6 6l3 1.500h6L18 6c1 3 1 5 .5 8-1 4-12 4-13 0C5 11 5 9 6 6z" fill="#fff" /></g>,
  people: <g fill="none" stroke="#fff" strokeWidth="1.600"><circle cx="9" cy="11" r="3.600" /><path d="M2.500 23c0-10 13-10 13 0" /><circle cx="17" cy="4.500" r="3.300" /><path d="M14 10c5-2 8 1 8.500 5" /></g>,
  chev: <path d="M4 16l8-8 8 8" fill="none" stroke="#fff" strokeWidth="2.200" />,
  drop: <g fill="#fff"><path d="M6.500 2l5.500 3.500-5.500 3.500L1 5.500zM17.500 2L23 5.500 17.500 9 12 5.500zM6.500 9l5.500 3.500L6.500 16 1 12.500zM17.500 9l5.500 3.500-5.500 3.500-5.500-3.500zM12 14l5 3.500-5 3.800-5-3.800z" /></g>,
  batt: <g fill="none" stroke="#fff" strokeWidth="2"><rect x="1" y="6" width="20" height="12" /><path d="M22.500 9.500v5" strokeWidth="2.500" /><rect x="5" y="9" width="10" height="6" fill="#fff" stroke="none" /></g>,
  snd: <g fill="none" stroke="#fff" strokeWidth="1.700"><path d="M2 9h3.500L11 3.500v17L5.500 15H2zM15 8.500l7 7M22 8.500l-7 7" /></g>,
  wifi: <g fill="none" stroke="#fff" strokeWidth="1.700"><path d="M3 22C3 11 11 4 22 4M8 22C8 14 14 9 22 9M13 22c0-5 4-8 9-8" /><circle cx="20" cy="20" r="2" fill="#fff" /></g>,
  note: <path d="M2 3h20v15h-6.500L12 22.500V18H2z" fill="none" stroke="#fff" strokeWidth="1.800" />,
  min: <path d="M5 12h14" stroke="#888" strokeWidth="1.600" />,
  rest: <g fill="none" stroke="#888" strokeWidth="1.700"><rect x="4" y="8" width="12" height="12" /><path d="M8 8V4h12v12h-4" /></g>,
  close: <path d="M3 3l18 18M21 3L3 21" stroke="#888" strokeWidth="1.600" />,
  closeb: <path d="M3 3l18 18M21 3L3 21" stroke="#000" strokeWidth="1.500" />,
  fl: <g fill="none" stroke="#111" strokeWidth="2.400"><rect x="4" y="10" width="10" height="10" /><path d="M9 9V4h11v11h-5" /><path d="M8 5h12" strokeWidth="3" /></g>,
  xx: <path d="M5 5l14 14M19 5L5 19" stroke="#111" strokeWidth="3" />,
};
function Adobe({ bg, c, t }) {
  return (
    <g>
      <rect x="1" y=".8" width="22" height="22.400" fill={bg} stroke={c} strokeWidth="1.500" />
      <text x="4.500" y="16.500" fontSize="12.500" fontWeight="700" fontFamily="Lato, sans-serif" fill={c}>{t}</text>
    </g>
  );
}
const Svg = styled.svg`
  width: ${(p) => p.$s}px;
  height: ${(p) => p.$h || p.$s}px;
  flex: none;
  display: block;
  overflow: visible;
`;
const Icon = ({ n, s = 34, h }) => (
  <Svg viewBox="0 0 24 24" $s={s} $h={h} preserveAspectRatio="none">{ic[n]}</Svg>
);

/* ---------- shell ---------- */
const Sheet = styled.div`
  position: relative;
  width: 3508px;
  height: 2480px;
  border: 2px solid ${NAVY};
  background: #fff;
  padding: 451px 352px 0 352px;
`;
const Desktop = styled.div`
  position: relative;
  width: 2800px;
  height: 1575px;
  display: flex;
  flex-direction: column;
  background: #efefef;
`;
const TitleBar = styled.div`
  height: 35px;
  flex: none;
  background: #fff;
  display: flex;
  align-items: center;
  padding: 0 27px 5px 5px;
  gap: 11px;
`;
const Grow = styled.div`flex: 1;`;
const WinButtons = styled.div`display: flex; gap: 48px; align-items: center;`;
const MenuBar = styled.div`
  height: 32px;
  flex: none;
  display: flex;
  align-items: center;
  gap: 22.5px;
  padding: 0 0 0 13px;
  border-bottom: 2px solid #bababa;
`;
const Tools = styled.div`
  height: ${(p) => p.$h}px;
  flex: none;
  display: flex;
  align-items: center;
  border-top: 2px solid #fbfbfb;
  border-bottom: 2px solid #b8b8b8;
`;
const Slot = styled.div`
  width: 51px;
  height: 50px;
  flex: none;
  display: flex;
  align-items: center;
  justify-content: center;
  ${(p) => p.$on && css`border: 2px solid #8f8f8f; border-radius: 4px; background: linear-gradient(#c9c9c9, #dcdcdc);`}
`;
const VDots = styled.div`
  width: 6px;
  height: ${(p) => p.$h || 42}px;
  flex: none;
  margin-left: ${(p) => p.$ml}px;
  margin-right: ${(p) => p.$mr || 0}px;
  background:
    repeating-linear-gradient(180deg, #fdfdfd 0 3px, #c6c6c6 3px 5px, transparent 5px 8.7px) 0 0 / 3px 100% no-repeat,
    repeating-linear-gradient(180deg, transparent 0 3px, #fdfdfd 3px 6px, #c6c6c6 6px 8.7px) 3px 0 / 3px 100% no-repeat;
`;
const HDots = styled.div`
  height: 6px;
  width: ${(p) => p.$w}px;
  flex: none;
  background:
    repeating-linear-gradient(90deg, #fdfdfd 0 3px, #c6c6c6 3px 5px, transparent 5px 8.7px) 0 0 / 100% 3px no-repeat,
    repeating-linear-gradient(90deg, transparent 0 3px, #fdfdfd 3px 6px, #c6c6c6 6px 8.7px) 0 3px / 100% 3px no-repeat;
`;
const Tri = styled.div`
  width: 0;
  height: 0;
  flex: none;
  border-left: ${(p) => p.$s || 6}px solid transparent;
  border-right: ${(p) => p.$s || 6}px solid transparent;
  border-${(p) => (p.$up ? "bottom" : "top")}: ${(p) => p.$t || 8}px solid ${(p) => p.$c || "#000"};
`;
const CaretCell = styled.div`
  width: 18px;
  flex: none;
  display: flex;
  justify-content: center;
`;
const Handle = ({ first }) => <VDots $ml={first ? 10 : 13} $mr={first ? 0.5 : 1.5} />;

function ToolRow({ items, h }) {
  return (
    <Tools $h={h}>
      {items.split(" ").map((k, i) =>
        k === "|" ? <Handle key={i} first={i === 0} /> :
        k === "v" ? <CaretCell key={i}><Tri /></CaretCell> :
        k === "g" ? <CaretCell key={i}><Tri $c="#9a9a9a" /></CaretCell> :
        <Slot key={i} $on={k === "touch"}><Icon n={k} /></Slot>
      )}
    </Tools>
  );
}

const Body = styled.div`
  flex: none;
  height: 1236px;
  display: flex;
`;
const SideBar = styled.div`
  width: 77px;
  flex: none;
  border-right: 2px solid #b8b8b8;
  padding: 11px 0 0 7px;
`;
const SideRow = styled.div`
  height: 49.9px;
  display: flex;
  align-items: center;
  padding-left: 5px;
  gap: 14px;
`;
const SideList = styled.div`padding-bottom: 8px;`;
const Docks = styled.div`
  width: 479px;
  flex: none;
  display: flex;
  flex-direction: column;
`;
const DockTitle = styled.div`
  height: ${(p) => p.$h}px;
  flex: none;
  padding: 0 2px 0 ${(p) => p.$pl}px;
  display: flex;
  align-items: center;
  justify-content: space-between;
`;
const DockButtons = styled.div`display: flex; gap: 3px;`;
const DockButton = styled.div`
  width: 19px;
  height: 19px;
  border: 2px solid #777;
  border-radius: 4px;
  background: #f6f6f6;
  display: flex;
  align-items: center;
  justify-content: center;
`;
const DockTools = styled.div`
  height: ${(p) => p.$h}px;
  flex: none;
  display: flex;
  align-items: center;
  padding-left: 11px;
  gap: 17px;
`;
const ListBox = styled.div`
  height: ${(p) => p.$h}px;
  flex: none;
  border: 2px solid #b8b8b8;
  border-radius: 3px;
  background: #fff;
  padding-top: ${(p) => p.$pt}px;
`;
const SplitH = styled.div`
  height: 12px;
  flex: none;
  display: flex;
  align-items: center;
  justify-content: center;
`;
const TreeRow = styled.div`
  height: 23.33px;
  display: flex;
  align-items: center;
  background: ${(p) => (p.$sel ? "#efefef" : "transparent")};
`;
const Branch = ({ plus, last }) => (
  <Svg viewBox="0 0 33 23.33" $s={33} $h={23.33}>
    <path d={`M15.500 0V${last ? 12 : 23.300}M15.500 12H30`} stroke="#999" strokeDasharray="1.500 1.500" fill="none" />
    {plus && <g><rect x="8" y="5" width="11.500" height="13" fill="#fff" stroke="#888" strokeWidth="1.400" /><path d="M10 11.500h7.500M13.700 7.500v8" stroke="#333" strokeWidth="1.500" /></g>}
  </Svg>
);
const IconCell = styled.div`width: 31.5px; flex: none; display: flex;`;
const SplitV = styled.div`
  width: 9px;
  flex: none;
  padding-top: 411px;
`;
const MapBox = styled.div`
  position: relative;
  flex: 1;
  margin-top: 3px;
  border: 2px solid #b8b8b8;
  background: #fff;
`;
const MapSvg = styled.svg`width: 2231px; height: 1229px; display: block;`;

const Box = styled.div`
  width: 19px;
  height: 19px;
  flex: none;
  border: 2px solid ${(p) => (p.$dis ? "#8f8f8f" : "#c0c0c0")};
  border-radius: 2px;
  background: ${(p) => (p.$dis ? "#efefef" : "#fff")};
  display: flex;
  align-items: center;
  justify-content: center;
`;
const Cross = () => (
  <Svg viewBox="0 0 12 12" $s={13}><path d="M2 2l8 8M10 2l-8 8" stroke="#000" strokeWidth="3.600" /></Svg>
);
const Check = ({ on, dis }) => <Box $dis={dis}>{on && <Cross />}</Box>;

/* ---------- status bar ---------- */
const Status = styled.div`
  height: 45px;
  flex: none;
  display: flex;
  align-items: center;
  padding: 0 25px 0 1255px;
  gap: 6px;
`;
const Gap = styled.div`width: ${(p) => p.$w}px; flex: none;`;
const Field = styled.div`
  width: ${(p) => p.$w}px;
  height: ${(p) => p.$h || 28}px;
  flex: none;
  display: flex;
  align-items: center;
  justify-content: ${(p) => (p.$center ? "center" : "flex-start")};
  padding-left: ${(p) => (p.$center ? 0 : p.$pl || 5)}px;
  border: 2px solid ${(p) => (p.$dis ? "#8f8f8f" : "#bababa")};
  border-radius: 4px;
  background: ${(p) => (p.$dis ? "#efefef" : "#fff")};
  overflow: hidden;
`;
const Arrows = styled.div`
  width: ${(p) => p.$w || 23}px;
  height: 100%;
  flex: none;
  border-left: 2px solid ${(p) => p.$c || "#c4c4c4"};
  display: flex;
  flex-direction: column;
  background: linear-gradient(#fbfbfb, #e4e4e4);
`;
const Half = styled.div`
  flex: 1;
  display: flex;
  align-items: center;
  justify-content: center;
  & + & { border-top: 2px solid ${(p) => p.$c || "#c4c4c4"}; }
`;
const Spin = ({ w, h, dis, children }) => (
  <Field $w={w} $h={h} $dis={dis}>
    {children}<Grow />
    <Arrows $c={dis ? "#8f8f8f" : undefined}>
      <Half $c={dis ? "#8f8f8f" : undefined}><Tri $up $s={5} $t={6} $c={dis ? "#777" : "#000"} /></Half>
      <Half $c={dis ? "#8f8f8f" : undefined}><Tri $s={5} $t={6} $c={dis ? "#777" : "#000"} /></Half>
    </Arrows>
  </Field>
);
const ComboBox = styled(Field)`
  background: ${(p) => (p.$plain ? "#fff" : "linear-gradient(#fbfbfb, #dedede)")};
`;
const Combo = ({ w, h, plain, children }) => (
  <ComboBox $w={w} $h={h} $plain={plain}>
    {children}<Grow />
    <Arrows $w={24}><Half><Tri $s={5.5} $t={7} /></Half></Arrows>
  </ComboBox>
);

/* ---------- taskbar ---------- */
const TaskBar = styled.div`
  height: 58px;
  flex: none;
  display: flex;
  background: #352304;
`;
const Start = styled.div`width: 70px; flex: none; display: flex; align-items: center; justify-content: center;`;
const Search = styled.div`
  width: 502px;
  flex: none;
  background: #f2f2f2;
  border-top: 1px solid #bbb;
  display: flex;
  align-items: center;
  padding: 0 19px 0 14px;
  gap: 14px;
`;
const Task = styled.div`
  width: 71.5px;
  flex: none;
  height: 58px;
  display: flex;
  flex-direction: column;
  align-items: center;
  justify-content: space-between;
  padding-top: 11px;
  background: ${(p) => (p.$on ? "#5f5138" : "transparent")};
`;
const Under = styled.div`
  width: ${(p) => (p.$full ? 71 : 58)}px;
  height: 3px;
  background: ${(p) => (p.$show ? "#6cb6ee" : "transparent")};
`;
const Tray = styled.div`
  display: flex;
  align-items: center;
  padding-right: 8px;
`;
const TrayCell = styled.div`width: ${(p) => p.$w}px; flex: none; display: flex; justify-content: center;`;
const Stack = styled.div`
  width: ${(p) => p.$w}px;
  flex: none;
  height: 58px;
  display: flex;
  flex-direction: column;
  align-items: center;
  padding-top: 5px;
  gap: 2px;
`;
const Peek = styled.div`width: 1px; height: 58px; background: #6a5c40; margin-left: 20px;`;

/* ---------- dialog ---------- */
const Dialog = styled.div`
  position: absolute;
  left: 969px;
  top: 268px;
  width: 864px;
  height: 969px;
  border: 2px solid #0f70b7;
  background: #efefef;
  box-shadow: 0 6px 34px rgba(0, 0, 0, 0.42);
  display: flex;
  flex-direction: column;
`;
const DialogTitle = styled.div`
  height: 44px;
  flex: none;
  background: #fff;
  display: flex;
  align-items: center;
  padding: 0 25px 2px 12px;
  gap: 10px;
`;
const Form = styled.div`padding: 29px 28px 0 27px; flex: none;`;
const FormRow = styled.div`
  display: flex;
  height: ${(p) => p.$h}px;
  margin-bottom: ${(p) => p.$mb}px;
  align-items: center;
`;
const Label = styled.div`width: ${(p) => p.$w}px; flex: none; display: flex; justify-content: ${(p) => (p.$end ? "flex-end" : "flex-start")};`;
const Button = styled.div`
  width: ${(p) => p.$w}px;
  height: ${(p) => p.$h || 33}px;
  flex: none;
  display: flex;
  align-items: center;
  justify-content: center;
  border: 2px solid ${(p) => p.$bc || "#b4b4b4"};
  border-radius: 4px;
  background: linear-gradient(#fbfbfb, #dcdcdc);
  ${(p) => p.$def && css`
    background: linear-gradient(#e4ecf5, #cbd7e4);
    border-top: 3px solid #469ce0;
    border-bottom: 3px solid #3f92d8;
  `}
`;
const ScrollFrame = styled.div`
  margin: 0 15px 0 16px;
  height: 639px;
  flex: none;
  border: 2px solid #b8b8b8;
  border-radius: 3px;
  display: flex;
  overflow: hidden;
`;
const ScrollBody = styled.div`
  width: 801px;
  flex: none;
  padding: 14px 14px 0 13px;
`;
const Row = styled.div`
  display: flex;
  align-items: center;
  height: ${(p) => p.$h}px;
  margin-top: ${(p) => p.$mt || 0}px;
  gap: ${(p) => p.$gap || 0}px;
`;
const Rule = styled.div`
  flex: 1;
  align-self: flex-start;
  height: ${(p) => (p.$flat ? 2 : 14)}px;
  margin: 6px 0 0 11px;
  border-top: 2px solid ${(p) => (p.$flat ? "#999" : "#bdbdbd")};
  border-right: ${(p) => (p.$flat ? 0 : 2)}px solid #bdbdbd;
  border-top-right-radius: 3px;
`;
const GroupBody = styled.div`
  height: ${(p) => p.$h}px;
  border: 2px solid #bdbdbd;
  border-top: 0;
  border-left-width: 1px;
  border-radius: 0 0 4px 4px;
  padding: 12px 14px 0 14px;
`;
const Extent = styled.div`
  display: grid;
  grid-template-columns: 52px 223px 10.5px 224px 11.5px 222px;
  row-gap: 11px;
  align-items: center;
  grid-auto-rows: 28.5px;
`;
const Cell = styled.div`
  grid-column: ${(p) => p.$c};
  grid-row: ${(p) => p.$r};
  justify-self: ${(p) => (p.$end ? "end" : "start")};
  display: flex;
`;
const RightTri = styled.div`
  width: 0; height: 0; flex: none;
  border-top: 9px solid transparent;
  border-bottom: 9px solid transparent;
  border-left: 11px solid #3a3a3a;
  margin: 0 10px 0 6px;
`;
const ScrollBar = styled.div`
  width: 22px;
  margin-top: 1px;
  display: flex;
  flex-direction: column;
  background: repeating-linear-gradient(45deg, #fff 0 2px, #e9e9e9 2px 4px);
`;
const SBtn = styled.div`
  height: 23px;
  flex: none;
  border: 2px solid #999;
  border-radius: 3px;
  background: linear-gradient(#fdfdfd, #dedede);
  display: flex;
  align-items: center;
  justify-content: center;
`;
const Thumb = styled.div`
  height: 422px;
  flex: none;
  border: 2px solid #8f8f8f;
  border-radius: 3px;
  background: linear-gradient(90deg, #fdfdfd, #dedede);
  display: flex;
  align-items: center;
  justify-content: center;
`;
const Grip = styled.div`
  width: 14px;
  height: 27px;
  background: repeating-linear-gradient(#e9e9e9 0 3px, transparent 3px 6px), repeating-linear-gradient(90deg, #aaa 0 2px, #eee 2px 5px);
`;
const Buttons = styled.div`
  display: flex;
  justify-content: flex-end;
  gap: 15px;
  padding: 17px 15px 0 0;
`;

/* ---------- annotations ---------- */
const Mark = styled.div`
  position: absolute;
  left: ${(p) => p.$x - 2}px;
  top: ${(p) => p.$y - 2}px;
  width: ${(p) => p.$w}px;
  height: ${(p) => p.$h}px;
  border: 4.5px solid ${NAVY};
`;
const Note = styled.div`
  position: absolute;
  left: ${(p) => p.$x - 2}px;
  top: ${(p) => p.$y - 2}px;
  display: flex;
  flex-direction: column;
`;
const Arrowed = styled.svg`
  position: absolute;
  left: ${(p) => p.$x - 22}px;
  top: ${(p) => p.$y - 2}px;
  width: 40px;
  height: ${(p) => p.$h}px;
  overflow: visible;
`;
const UpArrow = ({ x, y, h }) => (
  <Arrowed $x={x} $y={y} $h={h}>
    <path d={`M20 3V${h}M4.500 20L20 3L35.500 20`} fill="none" stroke={NAVY} strokeWidth="4" />
  </Arrowed>
);
const NF = `"Noto Sans", "Open Sans", sans-serif`;
const Big = ({ w, children }) => <T w={w} s={48} c={NAVY} f={NF} lh="60px">{children}</T>;

/* ---------- data ---------- */
const menus = [["Proyecto", 63], ["Edición", 48], ["Ver", 21], ["Capa", 36], ["Configuración", 96], ["Complementos", 102], ["Vectorial", 57], ["Ráster", 47], ["Base de datos", 99], ["Web", 31], ["Procesos", 63], ["Ayuda", 45]];
const row1 = "| page open save saveas newcomp compmgr | touch hand pan zin zout z11 zfull zsel zlay zlast znext bookp book refresh | info action g select v eps v desel table abacus sigma ruler v tip text v | help";
const row2 = "| pencils pencil savee pts curve g ptsm vert trash cut copy paste | abc pie abpin gpin geye gmove grot gedit | globep globes csw | py";
const side = [["vplus"], ["raster"], ["feather"], ["pgp", 1], ["wmsp", 1], ["wcsp"], ["wfsp", 1], ["comma"], ["virt"], ["vstar", 1]];
const tree = [["Inicio del proyecto", 128, "folder", 1], ["Inicio", 36, "folder", 1], ["Favoritos", 65, "star"], ["C:/", 22, "folder", 1], ["DB2", 29, "db2"], ["MSSQL", 48, "mssql"], ["Oracle", 45, "oracle"], ["PostGIS", 55, "pg"], ["SpatiaLite", 69, "spl", 1], ["ArcGisFeatureServer", 145, "afs"], ["ArcGisMapServer", 119, "ams"], ["OWS", 35, "ows"], ["Tile Server (XYZ)", 117, "wms"], ["WCS", 33, "wcs"], ["WFS", 32, "wfs"], ["WMS", 35, "wms"]];
const tasks = [["tview"], ["ff", 1], ["wa"], ["ae"], ["ps", 1], ["ai", 1], ["quill", 1, 1], ["atom", 1], ["gh", 1]];
const dots = [
  [56, 165], [85, 158], [92, 170], [100, 165], [118, 160], [110, 178], [95, 178], [166, 160], [176, 162], [398, 152],
  [445, 174], [462, 184], [440, 205], [484, 200], [460, 212], [510, 213], [450, 230], [543, 226], [437, 246], [466, 240], [456, 235], [485, 248], [543, 250], [536, 260], [442, 262], [456, 257], [470, 268], [488, 270], [500, 262], [512, 285], [522, 275], [466, 285], [459, 292], [492, 275], [501, 278], [516, 300], [509, 312], [477, 314], [498, 300],
  [399, 274], [376, 306], [390, 308], [410, 310], [380, 319], [424, 332], [396, 330], [414, 325], [363, 357], [382, 348], [405, 346], [374, 362], [408, 366], [388, 374], [400, 374], [360, 393], [374, 418], [380, 438],
  [484, 346], [495, 352], [507, 350], [482, 358], [498, 370], [473, 380], [526, 380], [510, 386], [516, 400], [506, 396], [501, 411],
  [552, 310], [565, 332], [562, 350], [562, 362], [560, 386], [570, 388], [561, 402], [567, 403],
  [432, 450], [425, 468], [416, 475], [414, 489], [436, 495], [477, 555], [727, 180],
  [964, 150], [992, 160], [1018, 160], [1040, 155], [1030, 170], [1015, 178], [1062, 168], [1056, 180], [1086, 155], [1092, 172], [1006, 195], [1005, 208], [1020, 188], [1022, 202], [1027, 236],
].map(([a, b]) => [1600 + a / 2.063, 1640 + b / 3]).concat([[2225, 1402], [2252.500, 1489.500]]);

const Line = (p) => <path fill="none" stroke={p.c || "#111"} strokeWidth={p.w || 1.8} strokeDasharray={p.dash} vectorEffect="non-scaling-stroke" strokeLinejoin="round" d={p.d} />;
const MapDrawing = () => (
  <MapSvg viewBox="921 694 2231 1229">
    <g transform="translate(1300 700) scale(.574 .3333)">
      <Line d="M1080 64L1092 40 1110 17 1130 26 1145 42 1158 64" />
      <Line d="M40 615L34 660 34 700 28 735 18 752 13 772 18 796 22 812 36 842 37 856 31 868 33 882 40 890" />
    </g>
    <g transform="translate(2160 1100) scale(.3333 .5102)">
      <Line d="M60 151L82 151 96 147 144 146 138 160 137 205 147 208 152 226 170 238 215 247 242 262 247 272 248 303 280 318 276 328 282 340 296 355 302 380 303 415 316 423 360 429 381 440 372 456 352 470 341 490 342 512 362 524 364 533 352 541 322 539 300 551 304 565 325 594" />
      <Line w={2.400} d="M60 573L110 573 200 582 325 594" />
      <Line d="M80 655L105 648 150 630 240 619 252 610 295 605 296 596" />
      <Line d="M80 824L100 826 145 835 180 831 250 843 258 837 292 820 332 817 324 779 370 802 402 825 416 850 421 885 431 902 419 935 411 970 345 991 308 974 275 976 228 964 218 998 180 1045 180 1075 162 1092 158 1130 150 1148 122 1168 120 1192 136 1192 145 1184 145 1220 102 1248 98 1258 75 1275 60 1292 30 1315 0 1355" />
      <Line dash="4 3" c="#888" w={1.300} d="M60 935L90 948 125 964 180 966 228 960" />
    </g>
    <g transform="translate(1600 1640) scale(.4847 .3333)">
      <Line d="M-60 165L0 178 30 192 112 222 200 188 288 148M30 192L48 168" />
      <Line d="M319 145L308 330 295 462 325 508 355 540 363 584 410 598 455 598 473 619 515 598 536 575 548 556 585 562 602 572 636 530 655 542 670 529 718 487 745 520 775 560 800 600 825 628 848 634 852 624 890 642 905 662 930 688 998 711 1060 705 1115 692 1120 685 1104 672 1080 672 1075 640 1076 600 1086 565 1120 518 1146 478 1162 415 1185 350 1204 315 1228 275 1250 248" />
      <Line w={2.400} d="M532 152L535 180 553 225 565 240 570 262 590 300 605 318 608 360 632 375 645 430 660 475 670 529" />
      <Line w={2.400} d="M480 150L520 178 548 192 585 190 610 180 632 152M319 152L390 156" />
      <Line w={2.400} d="M1125 145L1165 190 1205 215 1250 245" />
      <Line dash="4 3" c="#888" w={1.300} d="M403 160L397 200 395 262M425 325L470 352M525 230L525 420 510 465 480 488" />
      <Line dash="5 3" c="#888" w={1.300} d="M474 390L474 618M868 148L920 198 945 160 990 225 1040 272 1080 292 1108 165 1125 148" />
    </g>
    {dots.map(([x, y], i) => <circle key={i} cx={x} cy={y} r="5.600" fill="#dba03a" stroke="#33240c" strokeWidth="1.800" />)}
  </MapSvg>
);

const G = "#7a7a7a";
function SaveDialog() {
  return (
    <Dialog>
      <DialogTitle>
        <Icon n="quill" s={20} h={24} />
        <T w={234} s={17} f={SEGOE}>Guardar capa vectorial como...</T>
        <Grow />
        <T s={19} f={SEGOE}>?</T>
        <Gap $w={36} />
        <Icon n="closeb" s={16} />
      </DialogTitle>
      <Form>
        <FormRow $h={28} $mb={14}><Label $w={90}><T w={58}>Formato</T></Label><Combo w={715}><T w={159}>Archivo shape de ESRI</T></Combo></FormRow>
        <FormRow $h={33} $mb={14}>
          <Label $w={90}><T w={65}>File name</T></Label>
          <Field $w={591} $pl={2}><T w={579}>ummer school ceu/_Clases/Día 4/Bases Datos/Apartamentos-Airbnb/apt-airbnb.shp</T></Field>
          <Gap $w={15} />
          <Button $w={109} $bc="#858585"><T w={58}>Explorar</T></Button>
        </FormRow>
        <FormRow $h={28} $mb={12}><Label $w={90}><T w={81}>Layer name</T></Label><Field $w={715} $dis /></FormRow>
        <FormRow $h={35} $mb={23}>
          <Label $w={90}><T w={29}>SRC</T></Label>
          <Combo w={675} h={35}><T w={376}>SRC del proyecto (EPSG:3042 - ETRS89 / ETRS-TM30)</T></Combo>
          <Gap $w={3} />
          <Button $w={37} $h={35} $bc="#858585"><Icon n="crsbtn" s={23} /></Button>
        </FormRow>
      </Form>
      <ScrollFrame>
        <ScrollBody>
          <Row $h={28}><Label $w={392}><T w={82}>Codificación</T></Label><Combo w={382}><T w={51}>System</T></Combo></Row>
          <Row $h={20} $mt={14} $gap={7}><Check dis /><T w={345} c={G}>Guardar sólo los objetos espaciales seleccionados</T></Row>
          <Row $h={20} $mt={22}><RightTri /><Gap $w={4} /><T w={385} b c="#3a3a3a">Select fields to export and their export options</T><Rule $flat /></Row>
          <Row $h={20} $mt={25} $gap={7}><Check on /><T w={230}>Añadir archivo guardado al mapa</T></Row>
          <Row $h={28} $mt={14}><Label $w={392}><T w={180}>Exportación de simbología</T></Label><Combo w={382}><T w={96}>Sin simbología</T></Combo></Row>
          <Row $h={27} $mt={12}><Label $w={392}><T w={43} c={G}>Escala</T></Label><Spin w={382} h={27} dis><T w={57} c={G}>1:50000</T></Spin></Row>
          <Row $h={20} $mt={19}><Gap $w={4} /><Tri $s={8} $t={11} $c="#3a3a3a" /><Gap $w={11} /><T w={86} b c="#3a3a3a">Geometría</T><Rule /></Row>
          <GroupBody $h={122}>
            <Row $h={29}><Label $w={377}><T w={125}>Tipo de geometría</T></Label><Combo w={366} h={29}><T w={70}>Automatic</T></Combo></Row>
            <Row $h={19} $mt={13} $gap={6}><Check dis /><T w={114} c={G}>Force multi-type</T></Row>
            <Row $h={19} $mt={10} $gap={6}><Check dis /><T w={137} c={G}>Include z-dimension</T></Row>
          </GroupBody>
          <Row $h={20} $mt={20}><Gap $w={4} /><Tri $s={8} $t={11} $c="#3a3a3a" /><Gap $w={9} /><Check /><Gap $w={10} /><T w={199} b c="#3a3a3a">Extensión (actual: capa)</T><Rule /></Row>
          <GroupBody $h={200}>
            <Extent>
              <Cell $c={2} $r={1} $end><T w={40} c={G}>Norte</T></Cell>
              <Cell $c={4} $r={1}><Field $w={224} $dis><T w={145} c={G}>40.56273629126758</T></Field></Cell>
              <Cell $c={1} $r={2}><T w={42} c={G}>Oeste</T></Cell>
              <Cell $c={2} $r={2}><Field $w={223} $dis><T w={152} c={G}>-3.863907266766835</T></Field></Cell>
              <Cell $c={4} $r={2} $end><T w={31} c={G}>Este</T></Cell>
              <Cell $c={6} $r={2}><Field $w={222} $dis><T w={143} c={G}>-3.53695811920185</T></Field></Cell>
              <Cell $c={2} $r={3} $end><T w={23} c={G}>Sur</T></Cell>
              <Cell $c={4} $r={3}><Field $w={224} $dis><T w={154} c={G}>40.326280177353745</T></Field></Cell>
            </Extent>
            <Row $h={33} $mt={24}>
              <Gap $w={128} />
              <Button $w={218} $bc="#999"><T w={145} c={G}>Extensión de la capa</T></Button>
              <Gap $w={44} />
              <Button $w={225} $bc="#999"><T w={211} c={G}>Extensión de la vista del mapa</T></Button>
            </Row>
          </GroupBody>
        </ScrollBody>
        <ScrollBar>
          <SBtn><Tri $up $s={5} $t={6} /></SBtn>
          <Thumb><Grip /></Thumb>
          <Grow />
          <SBtn><Tri $up $s={5} $t={6} /></SBtn>
          <SBtn><Tri $s={5} $t={6} /></SBtn>
        </ScrollBar>
      </ScrollFrame>
      <Buttons>
        <Button $w={109} $h={32} $def><T w={54}>Aceptar</T></Button>
        <Button $w={109} $h={32}><T w={60}>Cancelar</T></Button>
        <Button $w={109} $h={32}><T w={45}>Ayuda</T></Button>
      </Buttons>
    </Dialog>
  );
}

const DockHead = ({ h, pl, hw, w, children }) => (
  <DockTitle $h={h} $pl={pl}>
    <HDots $w={hw} /><T w={w} s={14}>{children}</T><HDots $w={hw} />
    <DockButtons>
      <DockButton><Icon n="fl" s={16} /></DockButton>
      <DockButton><Icon n="xx" s={13} /></DockButton>
    </DockButtons>
  </DockTitle>
);

export default function App() {
  return (
    <Sheet>
      <Global />
      <Desktop>
        <TitleBar>
          <Icon n="quill" s={19} h={23} />
          <Gap $w={0} />
          <T w={204} s={17} c="#999" f={SEGOE}>QGIS 2.18.13 - dia4_madrid</T>
          <Grow />
          <WinButtons><Icon n="min" s={19} /><Icon n="rest" s={19} /><Icon n="close" s={19} /></WinButtons>
        </TitleBar>
        <MenuBar>{menus.map(([m, w]) => <T key={m} w={w}>{m}</T>)}</MenuBar>
        <ToolRow items={row1} h={57} />
        <ToolRow items={row2} h={56} />
        <ToolRow items="| osm" h={56} />
        <Body>
          <SideBar>
            <HDots $w={62} />
            <SideList>
              {side.map(([n, v]) => <SideRow key={n}><Icon n={n} s={35} />{v && <Tri $s={7} $t={8} />}</SideRow>)}
            </SideList>
            <HDots $w={62} />
          </SideBar>
          <Docks>
            <DockHead h={30} pl={4} hw={131} w={119}>Panel del explorador</DockHead>
            <DockTools $h={47}>
              <Icon n="addsel" s={22} /><Icon n="refresh" s={22} /><Icon n="funnel" s={22} /><Icon n="treeup" s={22} /><Icon n="infoc" s={22} />
            </DockTools>
            <ListBox $h={441} $pt={1}>
              {tree.map(([t, w, n, p], i) => (
                <TreeRow key={t}><Branch plus={p} last={i === tree.length - 1} /><IconCell><Icon n={n} s={23} /></IconCell><T w={w}>{t}</T></TreeRow>
              ))}
            </ListBox>
            <SplitH><HDots $w={151} /></SplitH>
            <DockHead h={22} pl={2} hw={156} w={90}>Panel de capas</DockHead>
            <DockTools $h={49}>
              <Icon n="brush" s={22} /><Icon n="group" s={22} /><Icon n="eye" s={22} /><Icon n="funnel" s={22} /><Icon n="epsf" s={23} />
              <Tri $s={7} $t={8} />
              <Icon n="treedn" s={22} /><Icon n="treeup" s={22} /><Icon n="rem" s={22} />
            </DockTools>
            <ListBox $h={635} $pt={1}>
              <TreeRow $sel><Branch /><Check on /><Gap $w={9} /><Svg viewBox="0 0 23 23" $s={23}><circle cx="11.500" cy="11.500" r="5" fill="#8d8d66" stroke="#6f7888" strokeWidth="1.500" /></Svg><Gap $w={9} /><T w={161} b u>apartments_airbnb</T></TreeRow>
              <TreeRow><Branch /><Check on /><Gap $w={9} /><Svg viewBox="0 0 23 23" $s={23}><rect x=".5" y="1" width="22" height="21" fill="none" stroke="#bbb" strokeDasharray="3 2" /></Svg><Gap $w={9} /><T w={130} b>BARRIOS copiar</T></TreeRow>
              <TreeRow><Branch last /><Check on /><Gap $w={9} /><Svg viewBox="0 0 23 23" $s={23}><rect x=".5" y=".5" width="22" height="22" fill="#fff" stroke="#666" strokeWidth="1.300" /></Svg><Gap $w={9} /><T w={182} b>DISTRITOS_20151002</T></TreeRow>
            </ListBox>
          </Docks>
          <SplitV><VDots $h={412} $ml={1} /></SplitV>
          <MapBox><MapDrawing /></MapBox>
        </Body>
        <Status>
          <T w={85}>Coordenada</T>
          <Field $w={369} $center><T w={121}>413889,4480527</T></Field>
          <Gap $w={1} /><Icon n="mouse" s={22} /><Gap $w={3} />
          <T w={45}>Escala</T>
          <Combo w={128} plain><T w={71}>1:173.237</T></Combo>
          <Gap $w={0} /><Icon n="lock" s={20} h={22} /><Gap $w={9} />
          <T w={84}>Amplificador</T>
          <Spin w={111} h={30}><T w={40}>100%</T></Spin>
          <Gap $w={1} />
          <T w={61}>Rotación</T>
          <Gap $w={2} />
          <Spin w={112} h={30}><T w={21}>0,0</T></Spin>
          <Gap $w={0} /><Check on /><T w={87}>Representar</T>
          <Grow /><Icon n="crs" s={22} /><T w={148}>EPSG:3042 (al vuelo)</T>
          <Gap $w={20} /><Icon n="bubble" s={24} h={22} />
        </Status>
        <TaskBar>
          <Start><Icon n="win" s={28} /></Start>
          <Search><Icon n="ring" s={32} /><T w={234} s={21} c="#333" f={SEGOE}>Escribe aquí para buscar</T><Grow /><Icon n="mic" s={24} h={26} /></Search>
          {tasks.map(([n, u, on]) => (
            <Task key={n} $on={on}><Icon n={n} s={n === "tview" ? 26 : 33} h={n === "tview" ? 26 : 34} /><Under $show={u} $full={on} /></Task>
          ))}
          <Grow />
          <Tray>
            <TrayCell $w={54}><Icon n="people" s={22} /></TrayCell>
            <TrayCell $w={52}><Icon n="chev" s={19} /></TrayCell>
            <TrayCell $w={16}><Icon n="drop" s={22} /></TrayCell>
            <TrayCell $w={52}><Icon n="batt" s={23} /></TrayCell>
            <TrayCell $w={16}><Icon n="snd" s={22} /></TrayCell>
            <TrayCell $w={58}><Icon n="wifi" s={20} /></TrayCell>
            <Stack $w={26}><T w={27} s={16} c="#fff" f={SEGOE} lh={1.45}>ESP</T><T w={17} s={16} c="#fff" f={SEGOE} lh={1.45}>ES</T></Stack>
            <Stack $w={130}><T w={39} s={17} c="#fff" f={SEGOE} lh={1.36}>11:03</T><T w={86} s={17} c="#fff" f={SEGOE} lh={1.4}>05/07/2018</T></Stack>
            <Icon n="note" s={24} h={26} />
            <Peek />
          </Tray>
        </TaskBar>
        <SaveDialog />
      </Desktop>

      <Note $x={1455} $y={243}><Big w={550}>Guardar en formato SHP</Big></Note>
      <Note $x={1666} $y={381}><Big w={388}>SCR (EPSG: 3042)</Big></Note>
      <Note $x={2132} $y={312}><Big w={608}>Guardar archivo en carpeta</Big><Big w={824}>(se generará uno nuevo archivo SHP)</Big></Note>
      <UpArrow x={1470.6} y={321} h={450} />
      <UpArrow x={1683.6} y={459} h={451} />
      <UpArrow x={2149} y={459} h={343} />
      <Mark $x={1428} $y={782} $w={213} $h={56} />
      <Mark $x={2037} $y={834} $w={131} $h={60} />
      <Mark $x={1428} $y={920} $w={440} $h={60} />
      <Mark $x={1794} $y={1629} $w={144} $h={64} />
    </Sheet>
  );
}
